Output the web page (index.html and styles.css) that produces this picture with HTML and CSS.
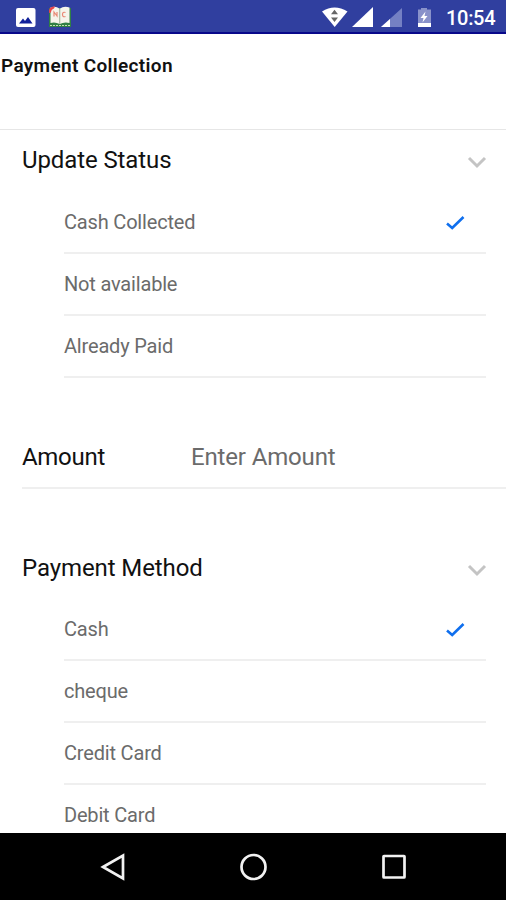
FILE: index.html
```html
<!DOCTYPE html>
<html lang="en">
<head>
<meta charset="utf-8">
<title>Payment Collection</title>
<link rel="stylesheet" href="styles.css">
</head>
<body>
<div class="screen">
  <header class="status-bar">
    <svg class="status-icons" width="90" height="32" viewBox="0 0 90 32">
      <rect x="16" y="8" width="19.500" height="19" rx="2" fill="#fff"/>
      <path d="M19 23.500l4-5 2 2.500 3-4 4.500 6.500z" fill="#10209a"/>
      <path d="M49 8h22v19H49z" fill="#2f7f45"/>
      <path d="M50.500 7.500q5-2 9.200 1.200Q64 5.500 69.500 7.500V23q-5-1.500-9.800 1Q55 21.500 50.500 23z" fill="#f5f4ec"/>
      <path d="M59.700 9v15" stroke="#a9bca5" stroke-width="1.200"/>
      <path d="M49 13q-1-7 6-6.500l-1 2q-3 1-3 4z" fill="#e8474b"/>
      <path d="M54 16.500V12l3 4V12M65.500 12.500q-3-1-3 2t3 2" stroke="#e88977" stroke-width="1.200" fill="none"/>
      <path d="M50 25.500h20" stroke="#c3dfb2" stroke-width="1" stroke-dasharray="2 1"/>
    </svg>
    <div class="status-right">
      <svg width="114" height="32" viewBox="322 0 114 32">
        <path d="M322 11.500Q334.500 3.500 347.500 11.500L334.700 27z" fill="#fff"/>
        <path d="M331 14.200l3.500-4.500 3.500 4.500zM331 17.500h7l-3.500 4.500z" fill="#666"/>
        <path d="M373 7v20h-21z" fill="#fff"/>
        <path d="M402 8v19h-21z" fill="#7480c3"/>
        <path d="M390 19v8h-9z" fill="#fff"/>
        <path d="M418 9.500h3V8h6v1.500h4V27h-13z" fill="#8992ca"/>
        <path d="M418 23h13v4h-13z" fill="#fff"/>
        <path d="M425.500 11.500l-5 6.500h3l-1 4.500 5-6.500h-3z" fill="#fff"/>
      </svg>
      <span class="clock">10:54</span>
    </div>
  </header>
  <div class="title-bar"><h1>Payment Collection</h1></div>
  <main>
    <section>
      <div class="section-head"><h2>Update Status</h2>
        <svg class="chevron" width="20" height="14" viewBox="0 0 20 14"><path d="M2 3l8 8 8-8"/></svg></div>
      <ul>
        <li><span>Cash Collected</span><svg class="check" width="20" height="16" viewBox="0 0 20 16"><path d="M2 8.500L7.200 13 18.500 2"/></svg></li>
        <li><span>Not available</span></li>
        <li><span>Already Paid</span></li>
      </ul>
    </section>
    <label class="amount"><span class="amount-label">Amount</span><input type="text" placeholder="Enter Amount"></label>
    <section>
      <div class="section-head method"><h2>Payment Method</h2>
        <svg class="chevron" width="20" height="14" viewBox="0 0 20 14"><path d="M2 3l8 8 8-8"/></svg></div>
      <ul>
        <li><span>Cash</span><svg class="check" width="20" height="16" viewBox="0 0 20 16"><path d="M2 8.500L7.200 13 18.500 2"/></svg></li>
        <li><span>cheque</span></li>
        <li><span>Credit Card</span></li>
        <li><span>Debit Card</span></li>
      </ul>
    </section>
  </main>
  <nav class="nav-bar">
    <svg width="28" height="30" viewBox="0 0 28 30"><path d="M4 15L24 3.500v23z"/></svg>
    <svg width="28" height="30" viewBox="0 0 28 30"><circle cx="13.500" cy="15" r="12"/></svg>
    <svg width="28" height="30" viewBox="0 0 28 30"><rect x="3.500" y="4" width="21" height="21.500" rx=".5"/></svg>
  </nav>
</div>
</body>
</html>
```
FILE: styles.css
```css
* { box-sizing: border-box; }
body { margin: 0; background: #fff; font-family: Roboto, sans-serif; }
.screen { width: 506px; height: 900px; display: flex; flex-direction: column; overflow: hidden; }
.status-bar {
  height: 34px; flex: none; display: flex; justify-content: space-between;
  background: #303f9f; border-bottom: 2px solid #08088a; color: #fff;
}
.status-right { display: flex; width: 184px; }
.status-right svg { flex: none; }
.clock { margin-left: 10px; font-size: 20px; line-height: 36px; font-weight: 500; letter-spacing: -.3px; white-space: nowrap; }
.title-bar { height: 96px; flex: none; padding: 18px 0 0 1px; border-bottom: 1px solid #e6e6e6; }
h1 { margin: 0; font-size: 19px; line-height: 27px; font-weight: 600; letter-spacing: .33px; color: #111; }
main { flex: 1; min-height: 0; overflow: hidden; }
.section-head { height: 62px; padding: 0 19px 3px 22px; display: flex; justify-content: space-between; align-items: center; }
.section-head.method { padding-bottom: 1px; }
h2 { margin: 0; font-size: 24px; line-height: 30px; font-weight: 400; letter-spacing: -.1px; color: #111; }
.chevron { margin-top: 4px; fill: none; stroke: #c4c4c4; stroke-width: 3; }
ul { margin: 0 20px 0 64px; padding: 0; list-style: none; }
li {
  height: 62px; padding-right: 21px; display: flex; align-items: center; justify-content: space-between;
  border-bottom: 2px solid #efefef; font-size: 20px; letter-spacing: -.18px; color: #6b6b6b;
}
.check { margin-top: 2px; fill: none; stroke: #0f6fee; stroke-width: 2.600; }
.amount {
  margin: 46px 0 0 22px; height: 65px; padding-top: 2px; display: flex; align-items: center;
  border-bottom: 2px solid #efefef; font-size: 24px; letter-spacing: -.15px; color: #111;
}
.amount-label { width: 169px; letter-spacing: -.3px; }
input { width: 280px; padding: 0; border: 0; outline: 0; background: none; font: inherit; letter-spacing: inherit; color: #6b6b6b; }
input::placeholder { color: #6b6b6b; opacity: 1; }
.amount + section { margin-top: 48px; }
.nav-bar { height: 67px; flex: none; padding: 0 98px 0 99px; display: flex; justify-content: space-between; align-items: center; background: #000; }
.nav-bar svg { fill: none; stroke: #f2f2f2; stroke-width: 2.700; }
```
